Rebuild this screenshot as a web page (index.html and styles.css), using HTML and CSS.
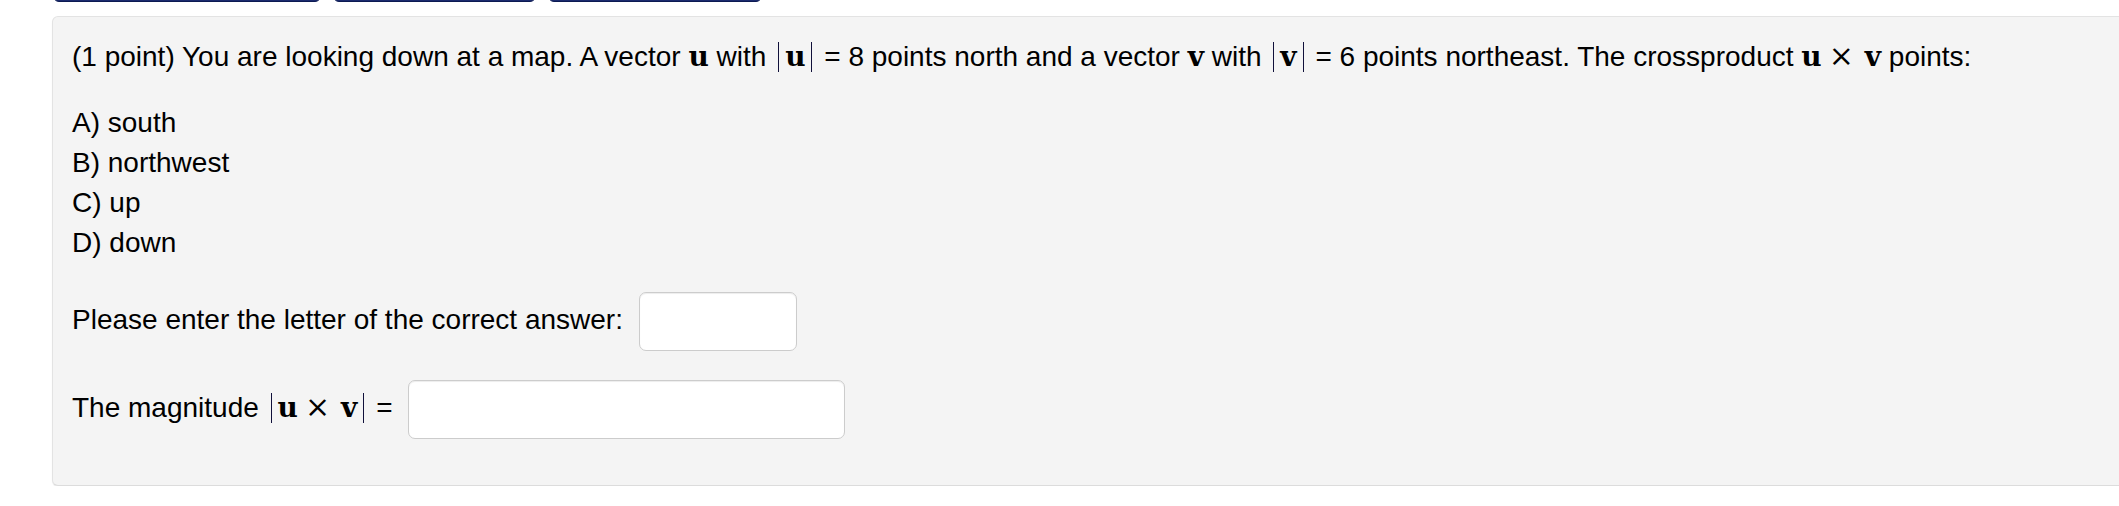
FILE: index.html
```html
<!DOCTYPE html>
<html lang="en">
<head>
    <meta charset="UTF-8">
    <title>Problem 1</title>
    <link rel="stylesheet" href="styles.css">
</head>
<body>
    <div class="navbtns">
        <a class="navbtn wide" href="#" aria-label="Previous Problem"></a>
        <a class="navbtn mid" href="#" aria-label="Problem List"></a>
        <a class="navbtn last" href="#" aria-label="Next Problem"></a>
    </div>
    <div class="problem">
        <p class="question">(1 point) You are looking down at a map. A vector <span class="mvar">u</span> with <span class="bar open"></span><span class="mvar">u</span><span class="bar close"></span> = 8 points north and a vector <span class="mvar">v</span> with <span class="bar open"></span><span class="mvar">v</span><span class="bar close"></span> = 6 points northeast. The crossproduct <span class="mvar">u</span><span class="times">×</span><span class="mvar">v</span> points:</p>
        <div class="choices">
            <div>A) south</div>
            <div>B) northwest</div>
            <div>C) up</div>
            <div>D) down</div>
        </div>
        <p class="answer-row">Please enter the letter of the correct answer: <input class="answer short" type="text"></p>
        <p class="answer-row">The magnitude <span class="bar open"></span><span class="mvar">u</span><span class="times">×</span><span class="mvar">v</span><span class="bar close"></span> = <input class="answer long" type="text"></p>
    </div>
</body>
</html>
```

FILE: styles.css
```css
body {
    margin: 0;
    overflow: hidden;
    background: #fff;
    color: #000;
    font-family: "Liberation Sans", Arial, sans-serif;
    font-size: 28px;
    line-height: 40px;
}

/* nav buttons, scrolled mostly out of view */
.navbtns {
    display: flex;
    gap: 12px;
    margin: -38px 0 0 53px;
}

.navbtn {
    display: block;
    height: 40px;
    box-sizing: border-box;
    background-color: #1b2b6e;
    border: 1px solid #0c1a52;
    border-radius: 6px;
}

.navbtn.wide { width: 268px; }
.navbtn.mid { width: 203px; }
.navbtn.last { width: 214px; }

.problem {
    margin: 14px -12px 0 52px;
    padding: 20px 19px 46px 19px;
    background-color: #f4f4f4;
    border: 1px solid #e3e3e3;
    border-bottom-color: #dcdcdc;
    border-radius: 6px;
    box-shadow: 0 1px 1px rgba(0, 0, 0, 0.08);
}

.question {
    margin: 0 0 26px 0;
}

/* math bits */
.mvar {
    font-family: "DejaVu Serif", "Liberation Serif", serif;
    font-weight: bold;
    font-size: 28px;
    line-height: 1;
}

.bar {
    display: inline-block;
    height: 30px;
    vertical-align: -6px;
    border-left: 1px solid #10103a;
}

.bar.open { margin: 0 6px 0 4px; }
.bar.close { margin: 0 4px 0 6px; }

.times {
    font-family: "DejaVu Serif", "Liberation Serif", serif;
    font-size: 30px;
    line-height: 1;
    margin: 0 11px 0 7px;
}

.choices div {
    height: 40px;
}

.answer-row {
    margin: 29px 0 0 0;
}

.answer {
    vertical-align: middle;
    box-sizing: border-box;
    height: 59px;
    margin-left: 8px;
    padding: 8px 12px;
    background: #fff;
    border: 1px solid #ccc;
    border-radius: 7px;
    box-shadow: inset 0 1px 1px rgba(0, 0, 0, 0.075);
    font-family: inherit;
    font-size: 28px;
}

.answer.short { width: 158px; }
.answer.long { width: 437px; }
```
